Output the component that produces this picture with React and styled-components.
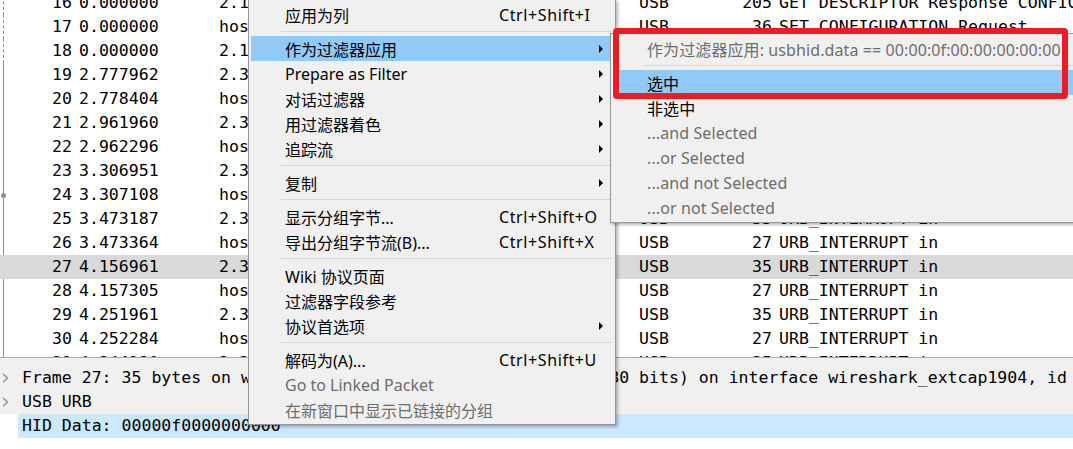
import styled, { createGlobalStyle } from 'styled-components';

const MONO = '"DejaVu Sans Mono", "Liberation Mono", monospace';
const UI = '"Noto Sans", "Noto Sans CJK SC", sans-serif';

const packets = [
  { no: 16, time: '0.000000', src: '2.1.0', dst: 'host', len: 205, info: 'GET DESCRIPTOR Response CONFIGURATION', rel: 'dashed' },
  { no: 17, time: '0.000000', src: 'host', dst: '2.1.0', len: 36, info: 'SET CONFIGURATION Request', rel: 'dashed' },
  { no: 18, time: '0.000000', src: '2.1.0', dst: 'host', len: 28, info: 'SET CONFIGURATION Response', rel: 'dashed' },
  { no: 19, time: '2.777962', src: '2.3.1', dst: 'host', len: 35, info: 'URB_INTERRUPT in', rel: 'solid' },
  { no: 20, time: '2.778404', src: 'host', dst: '2.3.1', len: 27, info: 'URB_INTERRUPT in', rel: 'solid' },
  { no: 21, time: '2.961960', src: '2.3.1', dst: 'host', len: 35, info: 'URB_INTERRUPT in', rel: 'solid' },
  { no: 22, time: '2.962296', src: 'host', dst: '2.3.1', len: 27, info: 'URB_INTERRUPT in', rel: 'solid' },
  { no: 23, time: '3.306951', src: '2.3.1', dst: 'host', len: 35, info: 'URB_INTERRUPT in', rel: 'solid' },
  { no: 24, time: '3.307108', src: 'host', dst: '2.3.1', len: 27, info: 'URB_INTERRUPT in', rel: 'dot' },
  { no: 25, time: '3.473187', src: '2.3.1', dst: 'host', len: 35, info: 'URB_INTERRUPT in', rel: 'solid' },
  { no: 26, time: '3.473364', src: 'host', dst: '2.3.1', len: 27, info: 'URB_INTERRUPT in', rel: 'solid' },
  { no: 27, time: '4.156961', src: '2.3.1', dst: 'host', len: 35, info: 'URB_INTERRUPT in', rel: 'none', selected: true },
  { no: 28, time: '4.157305', src: 'host', dst: '2.3.1', len: 27, info: 'URB_INTERRUPT in', rel: 'solid' },
  { no: 29, time: '4.251961', src: '2.3.1', dst: 'host', len: 35, info: 'URB_INTERRUPT in', rel: 'solid' },
  { no: 30, time: '4.252284', src: 'host', dst: '2.3.1', len: 27, info: 'URB_INTERRUPT in', rel: 'solid' },
  { no: 31, time: '4.344190', src: '2.3.1', dst: 'host', len: 35, info: 'URB_INTERRUPT in', rel: 'solid' },
];

const menu = [
  { label: '应用为列', shortcut: 'Ctrl+Shift+I' },
  { sep: true },
  { label: '作为过滤器应用', sub: true, active: true },
  { label: 'Prepare as Filter', sub: true },
  { label: '对话过滤器', sub: true },
  { label: '用过滤器着色', sub: true },
  { label: '追踪流', sub: true },
  { sep: true },
  { label: '复制', sub: true },
  { sep: true },
  { label: '显示分组字节...', shortcut: 'Ctrl+Shift+O' },
  { label: '导出分组字节流(B)...', shortcut: 'Ctrl+Shift+X' },
  { sep: true },
  { label: 'Wiki 协议页面' },
  { label: '过滤器字段参考' },
  { label: '协议首选项', sub: true },
  { sep: true },
  { label: '解码为(A)...', shortcut: 'Ctrl+Shift+U' },
  { label: 'Go to Linked Packet', disabled: true },
  { label: '在新窗口中显示已链接的分组', disabled: true },
];

const submenu = [
  { label: '作为过滤器应用: usbhid.data == 00:00:0f:00:00:00:00:00', disabled: true },
  { sep: true },
  { label: '选中', active: true },
  { label: '非选中' },
  { label: '...and Selected', disabled: true },
  { label: '...or Selected', disabled: true },
  { label: '...and not Selected', disabled: true },
  { label: '...or not Selected', disabled: true },
];

const details = [
  { text: 'Frame 27: 35 bytes on wire (280 bits), 35 bytes captured (280 bits) on interface wireshark_extcap1904, id 0', expandable: true },
  { text: 'USB URB', expandable: true },
  { text: 'HID Data: 00000f0000000000', selected: true },
];

function App() {
  return (
    <>
      <GlobalStyle />
      <Screen>
        <PacketList>
          <Rows>
            {packets.map((p) => (
              <PacketRow key={p.no} $selected={p.selected}>
                <Related $kind={p.rel} />
                <Cell $right>{p.no}</Cell>
                <Cell $pad>{p.time}</Cell>
                <Cell>{p.src}</Cell>
                <Cell>{p.dst}</Cell>
                <Cell>USB</Cell>
                <Cell $right>{p.len}</Cell>
                <Cell $pad>{p.info}</Cell>
              </PacketRow>
            ))}
          </Rows>
        </PacketList>

        <Details>
          {details.map((d) => (
            <DetailRow key={d.text} $selected={d.selected}>
              <Expander>
                {d.expandable && (
                  <svg width="7" height="10" viewBox="0 0 7 10">
                    <polyline points="1,1 5.5,5 1,9" fill="none" stroke="#8e8e8e" strokeWidth="1.3" />
                  </svg>
                )}
              </Expander>
              <DetailText $selected={d.selected}>{d.text}</DetailText>
            </DetailRow>
          ))}
        </Details>

        <ContextMenu>
          {menu.map((m, i) =>
            m.sep ? (
              <Separator key={i} />
            ) : (
              <MenuItem key={i} $active={m.active} $disabled={m.disabled}>
                <Label>{m.label}</Label>
                <Shortcut>{m.shortcut}</Shortcut>
                {m.sub && <Arrow />}
              </MenuItem>
            )
          )}
        </ContextMenu>

        <SubMenu>
          {submenu.map((m, i) =>
            m.sep ? (
              <Separator key={i} />
            ) : (
              <MenuItem key={i} $active={m.active} $disabled={m.disabled}>
                <Label $wide>{m.label}</Label>
              </MenuItem>
            )
          )}
        </SubMenu>

        <Callout />
      </Screen>
    </>
  );
}

export default App;

const GlobalStyle = createGlobalStyle`
  html, body {
    margin: 0;
    padding: 0;
    background: #ffffff;
    overflow: hidden;
  }
`;

const Screen = styled.div`
  position: relative;
  width: 1073px;
  height: 449px;
  overflow: hidden;
  background: #ffffff;
  display: flex;
  flex-direction: column;
`;

const PacketList = styled.div`
  height: 358px;
  flex: 0 0 358px;
  overflow: hidden;
  background: #ffffff;
  border-bottom: 1px solid #a8a8a8;
  box-sizing: border-box;
`;

const Rows = styled.div`
  margin-top: -9px;
`;

const PacketRow = styled.div`
  display: grid;
  grid-template-columns: 8px 64px 147px 160px 260px 90px 43px 1fr;
  height: 24px;
  line-height: 24px;
  font-family: ${MONO};
  font-size: 16.55px;
  color: #000000;
  white-space: nowrap;
  background: ${({ $selected }) => ($selected ? '#d9d9d9' : 'transparent')};
`;

const Cell = styled.div`
  overflow: hidden;
  text-align: ${({ $right }) => ($right ? 'right' : 'left')};
  padding-left: ${({ $pad }) => ($pad ? '7px' : '0')};
`;

const Related = styled.div`
  position: relative;
  &::before {
    content: '';
    display: ${({ $kind }) => ($kind === 'none' ? 'none' : 'block')};
    position: absolute;
    left: 3px;
    top: 0;
    bottom: 0;
    border-left: 1px ${({ $kind }) => ($kind === 'dashed' ? 'dashed' : 'solid')} #8c8c8c;
  }
  &::after {
    content: '';
    display: ${({ $kind }) => ($kind === 'dot' ? 'block' : 'none')};
    position: absolute;
    left: 1px;
    top: 10px;
    width: 5px;
    height: 5px;
    border-radius: 50%;
    background: #8c8c8c;
  }
`;

const Details = styled.div`
  flex: 1;
  padding-top: 8px;
  background: linear-gradient(#f0f0f0 0, #f0f0f0 56px, #ffffff 56px);
`;

const DetailRow = styled.div`
  display: flex;
  align-items: center;
  height: 24px;
`;

const Expander = styled.div`
  width: 18px;
  flex: 0 0 18px;
  display: flex;
  align-items: center;
  padding-left: 2px;
  box-sizing: border-box;
`;

const DetailText = styled.div`
  flex: 1;
  height: 24px;
  line-height: 24px;
  padding-left: 4px;
  font-family: ${MONO};
  font-size: 16.55px;
  color: #000000;
  white-space: nowrap;
  overflow: hidden;
  background: ${({ $selected }) => ($selected ? '#cce8ff' : 'transparent')};
`;

const ContextMenu = styled.div`
  position: absolute;
  left: 248px;
  top: -1px;
  width: 368px;
  box-sizing: border-box;
  padding: 2px 3px 2px 2px;
  background: #f0f0f0;
  border: 1px solid #979797;
  box-shadow: 2px 2px 3px rgba(0, 0, 0, 0.28);
  font-family: ${UI};
  font-size: 16px;
`;

const SubMenu = styled.div`
  position: absolute;
  left: 610px;
  top: 33px;
  width: 480px;
  box-sizing: border-box;
  padding: 2px 3px 2px 2px;
  background: #f0f0f0;
  border: 1px solid #979797;
  box-shadow: 2px 2px 3px rgba(0, 0, 0, 0.28);
  font-family: ${UI};
  font-size: 16px;
`;

const MenuItem = styled.div`
  display: flex;
  align-items: center;
  height: 25px;
  padding: 0 9px 0 34px;
  white-space: nowrap;
  color: ${({ $disabled }) => ($disabled ? '#6d6d6d' : '#000000')};
  background: ${({ $active }) => ($active ? '#91c9f7' : 'transparent')};
`;

const Label = styled.span`
  flex: ${({ $wide }) => ($wide ? '1' : '0 0 214px')};
  letter-spacing: ${({ $wide }) => ($wide ? '0.1px' : '0')};
`;

const Shortcut = styled.span`
  flex: 1;
  letter-spacing: 0.6px;
`;

const Arrow = styled.span`
  width: 0;
  height: 0;
  border-left: 4px solid #000000;
  border-top: 4px solid transparent;
  border-bottom: 4px solid transparent;
`;

const Separator = styled.div`
  height: 9px;
  display: flex;
  align-items: center;
  padding-left: 30px;
  &::after {
    content: '';
    flex: 1;
    height: 1px;
    background: #d6d6d6;
  }
`;

const Callout = styled.div`
  position: absolute;
  left: 613px;
  top: 28px;
  width: 455px;
  height: 71px;
  box-sizing: border-box;
  border: 6px solid #ed1c24;
  border-radius: 4px;
`;
